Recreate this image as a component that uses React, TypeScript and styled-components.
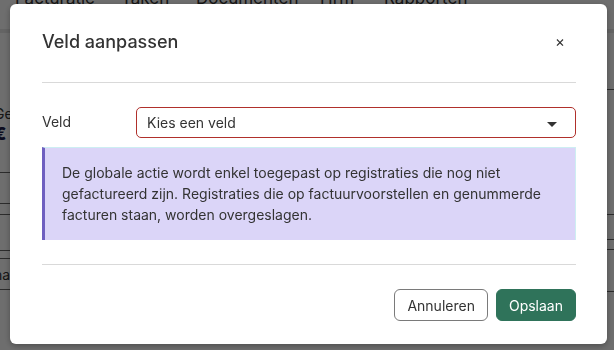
import React from "react";
import styled, { createGlobalStyle } from "styled-components";

const Global = createGlobalStyle`
  html, body { margin: 0; padding: 0; }
  body {
    width: 614px; height: 350px; overflow: hidden;
    font-family: Inter, "Noto Sans", Arial, sans-serif;
    background: #fff;
  }
`;

const Page = styled.div`
  width: 614px; height: 350px; background: #fff; display: flex; flex-direction: column;
`;

const TopNav = styled.nav`
  height: 33px; border-bottom: 4px solid #e8e8e8; display: flex; align-items: flex-start;
  padding-left: 15px; gap: 0; box-sizing: border-box; flex-shrink: 0;
`;

const NavItem = styled.span<{ $w: number }>`
  width: ${(p) => p.$w}px; font-size: 17px; color: #333; margin-top: -12px; line-height: 20px;
`;

const PageBody = styled.div`
  display: flex; justify-content: space-between; flex: 1;
`;

const SideCol = styled.div`
  width: 40px; display: flex; flex-direction: column;
`;

const Row = styled.div<{ $h: number; $line?: boolean; $shift?: number }>`
  height: ${(p) => p.$h}px; box-sizing: border-box;
  border-bottom: ${(p) => (p.$line ? "1px solid #666" : "none")};
  font-size: 14px; color: #333; display: flex; align-items: center; overflow: hidden;
  white-space: nowrap; margin-left: ${(p) => p.$shift ?? 0}px;
`;

const Euro = styled.span`
  font-weight: 800; color: #1c1c4a; font-size: 18px;
`;

const Overlay = styled.div`
  position: fixed; inset: 0; background: rgba(0, 0, 0, 0.57);
  display: flex; align-items: flex-start; padding: 4px 7px 0 10px; box-sizing: border-box;
`;

const Modal = styled.div`
  width: 597px; height: 340px; background: #fff; border-radius: 6px;
  box-shadow: 0 2px 6px rgba(0, 0, 0, 0.3); padding: 0 31px 0 32px; box-sizing: border-box;
  display: flex; flex-direction: column;
`;

const Header = styled.div`
  display: flex; align-items: center; justify-content: space-between;
  padding: 24px 0 26px; border-bottom: 1px solid #d9d9d9;
`;

const Title = styled.h2`
  margin: 0; font-size: 18px; font-weight: 500; line-height: 28px; color: #333;
`;

const Close = styled.button`
  border: 0; background: none; padding: 0; margin-right: 11px; font-size: 15px; line-height: 20px;
  color: #333; font-family: inherit; cursor: pointer;
`;

const Body = styled.div`
  padding: 24px 0; border-bottom: 1px solid #d9d9d9; display: flex; flex-direction: column; gap: 9px;
`;

const FieldRow = styled.div`
  display: flex; align-items: center;
`;

const Label = styled.label`
  width: 94px; font-size: 14px; color: #333; margin-top: -2px;
`;

const Select = styled.div`
  flex: 1; height: 31px; box-sizing: border-box; border: 1px solid #b0302b; border-radius: 5px;
  display: flex; align-items: center; justify-content: space-between; padding: 0 18px 0 10px;
  font-size: 14px; color: #333;
`;

const Caret = styled.span`
  width: 0; height: 0; border-left: 5px solid transparent; border-right: 5px solid transparent;
  border-top: 5px solid #333; margin-top: 3px;
`;

const Info = styled.div`
  background: #dbd5f8; border-left: 3px solid #6f5fc0; border-top: 1px solid #cdeef2;
  border-right: 1px solid #cdeef2; padding: 14px 18px 15px 17px; font-size: 14px; line-height: 21px;
  color: #333; height: 93px; box-sizing: border-box;
`;

const Footer = styled.div`
  display: flex; justify-content: flex-end; gap: 8px; padding-top: 24px;
`;

const Button = styled.button<{ $primary?: boolean }>`
  height: 32px; padding: 0 12px; border-radius: 6px; font-family: inherit; font-size: 14px;
  border: 1px solid ${(p) => (p.$primary ? "#2f735a" : "#7a7a7a")};
  background: ${(p) => (p.$primary ? "#2f735a" : "#fff")};
  color: ${(p) => (p.$primary ? "#fff" : "#333")};
`;

export default function App() {
  return (
    <>
      <Global />
      <Page>
        <TopNav>
          <NavItem $w={106}>Facturatie</NavItem>
          <NavItem $w={75}>Taken</NavItem>
          <NavItem $w={124}>Documenten</NavItem>
          <NavItem $w={64}>Hrm</NavItem>
          <NavItem $w={90}>Rapporten</NavItem>
        </TopNav>
        <PageBody>
          <SideCol>
            <Row $h={70} />
            <Row $h={20} $shift={-6}>Ge</Row>
            <Row $h={20} $shift={-6}><Euro>€</Euro></Row>
            <Row $h={30} $line />
            <Row $h={31} $line />
            <Row $h={11} $line />
            <Row $h={36} $line />
            <Row $h={8} $line />
            <Row $h={31} $line $shift={-6}>na</Row>
          </SideCol>
          <SideCol>
            <Row $h={57} $line />
            <Row $h={125} $line />
            <Row $h={25} $line />
            <Row $h={10} $line />
            <Row $h={42} $line />
          </SideCol>
        </PageBody>
      </Page>
      <Overlay>
        <Modal>
          <Header>
            <Title>Veld aanpassen</Title>
            <Close aria-label="close">×</Close>
          </Header>
          <Body>
            <FieldRow>
              <Label>Veld</Label>
              <Select>
                <span>Kies een veld</span>
                <Caret />
              </Select>
            </FieldRow>
            <Info>
              De globale actie wordt enkel toegepast op registraties die nog niet gefactureerd zijn.
              Registraties die op factuurvoorstellen en genummerde facturen staan, worden overgeslagen.
            </Info>
          </Body>
          <Footer>
            <Button>Annuleren</Button>
            <Button $primary>Opslaan</Button>
          </Footer>
        </Modal>
      </Overlay>
    </>
  );
}
